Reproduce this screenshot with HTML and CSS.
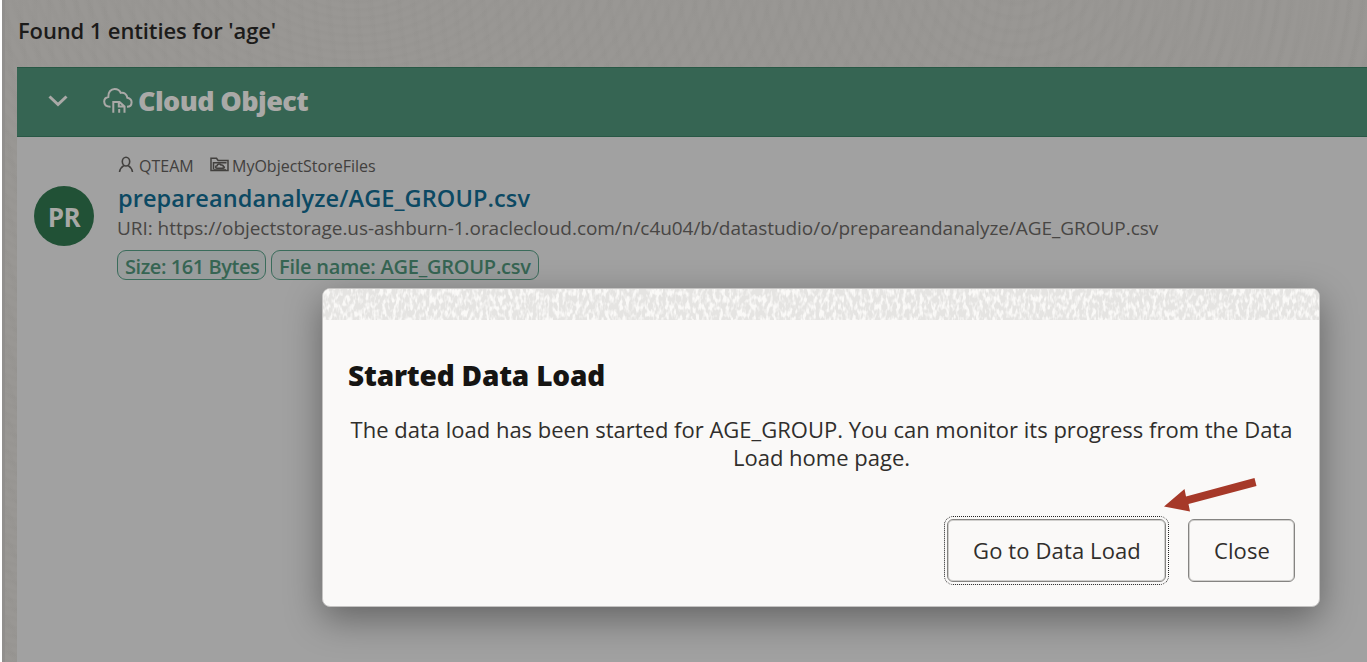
FILE: index.html
```
<!DOCTYPE html>
<html lang="en">
<head>
<meta charset="utf-8">
<title>Catalog search</title>
<link rel="stylesheet" href="styles.css">
</head>
<body>
<main class="page">
  <h1 class="found">Found 1 entities for 'age'</h1>
  <section class="panel">
    <header class="group">
      <svg class="chevron" width="22" height="14" viewBox="0 0 22 14"><path d="M2.500 2.500 11 10.500 19.500 2.500" fill="none" stroke="currentColor" stroke-width="3"/></svg>
      <svg class="cloud" width="30" height="27" viewBox="0 0 30 27" fill="none" stroke="currentColor" stroke-width="2">
        <path d="M7.500 19.800C3.500 19.800 1.200 17.600 1.200 14.600 1.200 11.900 3 10.400 5.300 10 5 5.200 7.900 2 11.600 2 14.600 2 16.800 3.600 17.700 5.900 21.200 5.100 23.900 7.300 24.300 10.700 27 11.300 28.600 13 28.600 15.300 28.600 17.900 26.800 19.800 24 19.800"/>
        <path d="M10.300 25.800V15h6.200l5 4.500v6.300M15.800 15v4.500h5.600M16.200 22v3.800" stroke-width="2"/>
      </svg>
      <h2 class="group-title">Cloud Object</h2>
    </header>
    <article class="entity">
      <div class="avatar">PR</div>
      <div class="details">
        <div class="meta">
          <svg class="person" width="16" height="17" viewBox="0 0 16 17" fill="none" stroke="currentColor" stroke-width="1.600"><ellipse cx="8" cy="5.600" rx="3.700" ry="4.400"/><path d="M1.500 16C2 12.500 3.800 10.800 5.800 9.600M14.500 16C14 12.500 12.200 10.800 10.200 9.600"/></svg>
          <span class="owner">QTEAM</span>
          <svg class="folder" width="19" height="15" viewBox="0 0 19 15" fill="none" stroke="currentColor" stroke-width="1.500"><path d="M1 13.500V1.200h5.500l1.600 2.300H18v10z"/><path d="M3.500 12.500V5.800h13"/><path d="M7 11.300c-2-.2-1.800-2.400 0-2.500.4-2 3-2.500 4-.8 2-.4 2.600 1 2.400 1.600 1.400.2 1.200 1.700 0 1.700zM4 13h12"/></svg>
          <span class="store">MyObjectStoreFiles</span>
        </div>
        <div class="name">prepareandanalyze/AGE_GROUP.csv</div>
        <div class="uri">URI: https://objectstorage.us-ashburn-1.oraclecloud.com/n/c4u04/b/datastudio/o/prepareandanalyze/AGE_GROUP.csv</div>
        <div class="chips"><span class="chip chip-size">Size: 161 Bytes</span><span class="chip chip-file">File name: AGE_GROUP.csv</span></div>
      </div>
    </article>
  </section>
</main>
<div class="dialog" role="dialog">
  <svg class="strip" width="996" height="31">
    <filter id="weave" x="0" y="0" width="100%" height="100%" color-interpolation-filters="sRGB">
      <feTurbulence type="fractalNoise" baseFrequency="0.3 0.14" numOctaves="2" seed="8"/>
      <feColorMatrix values="0 0 0 0 .98  0 0 0 0 .976  0 0 0 0 .97  4 0 0 0 -1.700"/>
    </filter>
    <rect width="996" height="31" fill="#e5e4e2"/>
    <rect width="996" height="31" filter="url(#weave)"/>
  </svg>
  <div class="content">
    <h2 class="dialog-title">Started Data Load</h2>
    <p class="message">The data load has been started for AGE_GROUP. You can monitor its progress from the Data<br>Load home page.</p>
    <div class="actions">
      <button class="button primary">Go to Data Load</button>
      <button class="button close">Close</button>
    </div>
  </div>
  <svg class="arrow" width="96" height="40" viewBox="0 0 96 40"><path d="M1 30.500 21.500 13 23 20.500 91.500 2 93.500 10 25.500 28 27 35.500z" fill="#a63929"/></svg>
</div>
</body>
</html>
```
FILE: styles.css
```
* { box-sizing: border-box; }
body {
  margin: 0;
  height: 662px;
  overflow: hidden;
  position: relative;
  background: #fff;
  font-family: "Open Sans", "Noto Sans", sans-serif;
}
h1, h2, p { margin: 0; }
.page {
  margin-left: 2px;
  height: 662px;
  padding: 15px 0 0 12px;
  border-left: 3px solid #918f8d;
  background:
    repeating-radial-gradient(ellipse at 350px -50px, rgba(80,80,75,.025) 0 2px, transparent 6px 10px, rgba(80,80,75,.025) 12px),
    repeating-radial-gradient(circle at 1010px -40px, rgba(80,80,75,.025) 0 2px, transparent 6px 12px, rgba(80,80,75,.025) 14px),
    #999794;
  display: flex;
  flex-direction: column;
}
.found {
  height: 52px;
  padding-left: 1px;
  font-size: 22px;
  line-height: 31px;
  font-weight: 600;
  letter-spacing: -.12px;
  color: #1c1b1a;
}
.panel { flex: 1; background: #a1a1a1; }
.group {
  height: 70px;
  display: flex;
  align-items: center;
  padding-left: 30px;
  background: #366553;
  border-top: 1px solid #285845;
  border-bottom: 1px solid #285845;
  color: #aaa9a7;
}
.chevron { margin: 0 35px 2px 0; }
.cloud { margin: 0 5px 3px -1px; }
.group-title { font-size: 27px; font-weight: 800; line-height: 38px; letter-spacing: -.6px; padding-bottom: 2px; }
.entity { display: flex; padding: 17px 0 0 17px; }
.avatar {
  width: 60px;
  height: 60px;
  margin: 32px 24px 0 0;
  border-radius: 50%;
  background: #215136;
  color: #a8a8a6;
  font-size: 26px;
  font-weight: 700;
  letter-spacing: -.4px;
  line-height: 62px;
  text-align: center;
}
.details { white-space: nowrap; }
.meta { display: flex; align-items: center; height: 28px; padding-bottom: 4px; font-size: 16px; font-weight: 500; color: #42403e; }
.person { margin: 0 5px 3px 0; }
.owner { width: 72px; }
.folder { margin: 0 3px 3px -1px; }
.store { letter-spacing: 0; }
.name { font-size: 23.500px; line-height: 32px; font-weight: 600; letter-spacing: .1px; color: #0c4963; }
.uri { margin-left: -1px; font-size: 19px; line-height: 28px; letter-spacing: -.045px; color: #484644; }
.chips { display: flex; gap: 5px; margin: 8px 0 0 -1px; }
.chip {
  height: 30px;
  padding: 3px 0 0 7px;
  border: 1.500px solid #3a6c5b;
  border-radius: 9px;
  background: #989c9c;
  color: #366553;
  font-size: 20px;
  line-height: 26px;
  font-weight: 600;
}
.chip-size { width: 149px; letter-spacing: -.44px; }
.chip-file { width: 268px; letter-spacing: -.24px; }
.dialog {
  position: absolute;
  left: 322px;
  top: 288px;
  width: 998px;
  height: 319px;
  border: 1px solid #c4c3c2;
  border-radius: 8px;
  background: #faf9f8;
  box-shadow: 0 12px 36px rgba(0,0,0,.38);
}
.strip { display: block; border-radius: 7px 7px 0 0; }
.content { padding: 35px 24px 0 25px; }
.dialog-title { font-size: 28px; font-weight: 800; line-height: 40px; letter-spacing: -.19px; color: #161513; }
.message { margin-top: 20px; font-size: 22px; line-height: 28px; text-align: center; white-space: nowrap; color: #302e2c; }
.actions { display: flex; justify-content: flex-end; gap: 22px; margin-top: 48px; }
.button {
  height: 63px;
  padding: 0 0 1px 1px;
  border: 1px solid #858482;
  box-shadow: inset 0 0 0 1px rgba(133,132,130,.35);
  border-radius: 6px;
  background: #faf9f8;
  font: 22px "Open Sans", sans-serif;
  letter-spacing: .12px;
  color: #302e2c;
}
.primary { width: 219px; outline: 1px dotted #222; outline-offset: 2px; }
.close { width: 107px; }
.arrow { position: absolute; left: 840px; top: 187px; }
```
